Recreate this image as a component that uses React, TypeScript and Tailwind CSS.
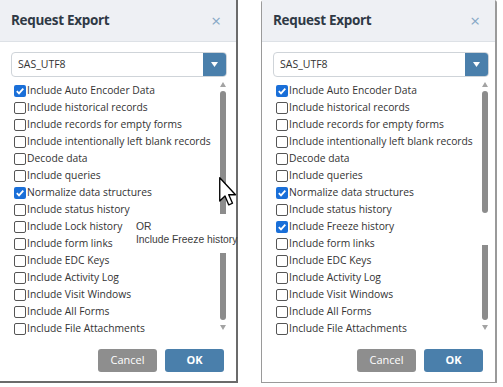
import React from 'react';

const FONT = "'Open Sans', 'Liberation Sans', sans-serif";

const leftItems: [string, boolean][] = [
  ['Include Auto Encoder Data', true],
  ['Include historical records', false],
  ['Include records for empty forms', false],
  ['Include intentionally left blank records', false],
  ['Decode data', false],
  ['Include queries', false],
  ['Normalize data structures', true],
  ['Include status history', false],
  ['Include Lock history', false],
  ['Include form links', false],
  ['Include EDC Keys', false],
  ['Include Activity Log', false],
  ['Include Visit Windows', false],
  ['Include All Forms', false],
  ['Include File Attachments', false],
];

const rightItems: [string, boolean][] = leftItems.map(([label, checked]) =>
  label === 'Include Lock history' ? ['Include Freeze history', true] : [label, checked]
);

const Box: React.FC<{ checked: boolean }> = ({ checked }) =>
  checked ? (
    <span className="flex items-center justify-center w-[12px] h-[12px] rounded-[2px] bg-[#1a6fd8] shrink-0">
      <svg width="10" height="10" viewBox="0 0 10 10">
        <path d="M1.8 5.2 L4 7.4 L8.3 2.6" fill="none" stroke="#fff" strokeWidth="1.8" />
      </svg>
    </span>
  ) : (
    <span className="block w-[12px] h-[12px] rounded-[2px] border border-[#555] bg-white shrink-0" />
  );

const Scrollbar: React.FC<{ gap?: boolean }> = ({ gap }) => (
  <div className="w-[8px] flex flex-col items-center">
    <svg width="6" height="5" viewBox="0 0 6 5">
      <path d="M0 5 L3 0 L6 5 Z" fill="#a3a3a3" />
    </svg>
    {gap ? (
      <div className="flex flex-col mt-[4px]">
        <div className="w-[6px] h-[122px] rounded-full bg-[#8c8c8c]" />
        <div className="h-[32px]" />
        <div className="w-[6px] h-[75px] rounded-b-full bg-[#8c8c8c]" />
      </div>
    ) : (
      <div className="w-[6px] h-[229px] mt-[4px] rounded-full bg-[#8c8c8c]" />
    )}
    <svg className="mt-[5px]" width="6" height="5" viewBox="0 0 6 5">
      <path d="M0 0 L6 0 L3 5 Z" fill="#a3a3a3" />
    </svg>
  </div>
);

const Dialog: React.FC<{ items: [string, boolean][]; gap?: boolean; className: string; children?: React.ReactNode }> = ({
  items,
  gap,
  className,
  children,
}) => (
  <div className={`relative flex flex-col h-[383px] bg-white ${className}`} style={{ fontFamily: FONT }}>
    <div className="flex items-center justify-between h-[42px] px-[11px] bg-[#eef0f4] border-b border-[#dde1e6]">
      <span className="text-[13.5px] font-bold text-[#2f3945] tracking-[-0.3px]">Request Export</span>
      <span className="text-[17px] leading-none text-[#86a8c6] mr-[4px]">×</span>
    </div>
    <div className="flex flex-col px-[11px] pt-[10px]">
      <div className="flex h-[25px] w-[216px] border border-[#cfd4d9] rounded-[4px] overflow-hidden">
        <span className="flex-1 flex items-center pl-[6px] text-[10.5px] text-[#333]">SAS_UTF8</span>
        <span className="w-[23px] flex items-center justify-center bg-[#4a7fab]">
          <svg width="7" height="5" viewBox="0 0 7 5">
            <path d="M0 0 L7 0 L3.5 5 Z" fill="#fff" />
          </svg>
        </span>
      </div>
      <div className="flex mt-[5px] w-[216px]">
        <div className="flex-1 flex flex-col pl-[3px]">
          {items.map(([label, checked]) => (
            <div key={label} className="flex items-center gap-[1px] h-[17px] text-[10.3px] text-[#333] whitespace-nowrap">
              <Box checked={checked} />
              <span>{label}</span>
            </div>
          ))}
        </div>
        <Scrollbar gap={gap} />
      </div>
      <div className="flex justify-end gap-[8px] mt-[12px] pr-[1px]">
        <button className="w-[59px] h-[23px] rounded-[3px] bg-[#8e8e8e] text-white text-[11px]">Cancel</button>
        <button className="w-[59px] h-[23px] rounded-[3px] bg-[#4a7fab] text-white text-[11px] font-bold">OK</button>
      </div>
    </div>
    {children}
  </div>
);

export default function App() {
  return (
    <div className="flex w-[503px] h-[387px] bg-white overflow-hidden">
      <Dialog items={leftItems} className="w-[238px] border-r-2 border-b-2 border-[#6b6b6b]">
        <div
          className="absolute left-[134px] top-[214px] w-[102px] h-[39px] bg-white pl-[2px] pt-[6px] leading-[13px] text-[10.3px] text-[#3c3c3c]"
          style={{ fontFamily: "'Liberation Sans', Arial, sans-serif" }}
        >
          <div>OR</div>
          <div className="whitespace-nowrap">Include Freeze history</div>
        </div>
        <svg className="absolute left-[219px] top-[177px]" width="18" height="30" viewBox="0 0 12 20">
          <path d="M0.5 0.5 L0.5 16 L4 12.6 L6.5 18.6 L9 17.5 L6.5 11.8 L11 11.8 Z" fill="#fff" stroke="#000" strokeWidth="0.9" strokeLinejoin="round" />
        </svg>
      </Dialog>
      <div className="w-[23px]" />
      <Dialog items={rightItems} gap className="w-[236px] border-l border-r-2 border-b border-[#9a9a9a] rounded-t-[3px]" />
    </div>
  );
}
